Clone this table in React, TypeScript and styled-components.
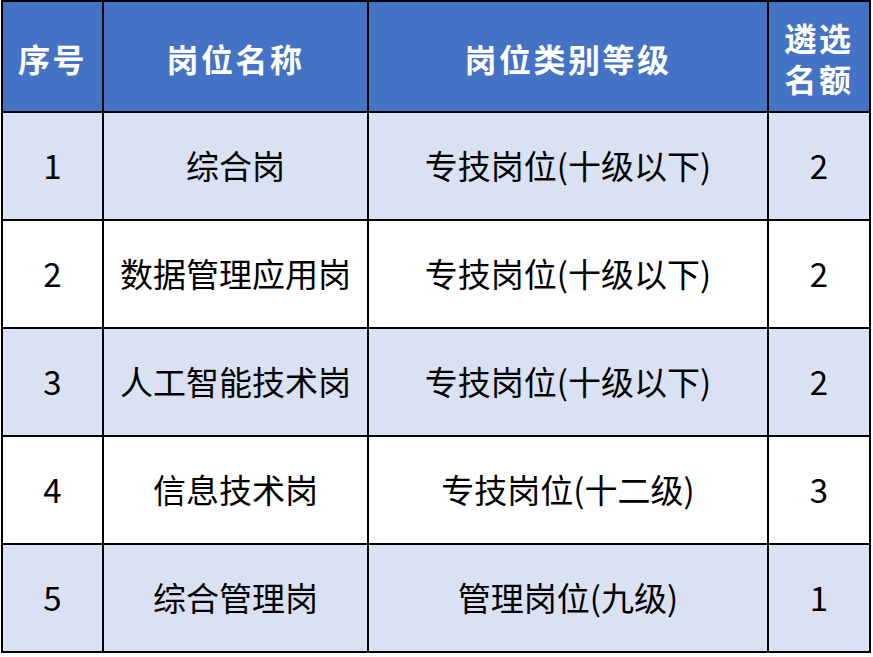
import styled, { createGlobalStyle } from 'styled-components';

const GlobalStyle = createGlobalStyle`
  html, body {
    margin: 0;
    padding: 0;
    background: #ffffff;
  }
  body {
    font-family: "Noto Sans CJK SC", "Noto Sans", sans-serif;
  }
`;

const Table = styled.div`
  display: grid;
  grid-template-columns: 99px 263px 398px 100px;
  grid-template-rows: 109px repeat(5, 106px);
  gap: 2px;
  padding: 2px;
  margin-left: 1px;
  width: max-content;
  background: #000000;
`;

const HeadCell = styled.div`
  display: flex;
  flex-direction: column;
  align-items: center;
  justify-content: center;
  text-align: center;
  background: #4472c4;
  color: #ffffff;
  font-size: 32px;
  font-weight: 700;
  letter-spacing: 2.5px;
  line-height: 41px;
  padding-top: 3px;
`;

const HeadLine = styled.span`
  display: block;
  height: 41px;
`;

const Cell = styled.div<{ $shaded: boolean }>`
  display: flex;
  align-items: center;
  justify-content: center;
  background: ${(p) => (p.$shaded ? '#d9e1f2' : '#ffffff')};
  color: #000000;
  font-size: 33px;
  font-weight: 400;
  padding-bottom: 2px;
`;

const rows = [
  ['1', '综合岗', '专技岗位(十级以下)', '2'],
  ['2', '数据管理应用岗', '专技岗位(十级以下)', '2'],
  ['3', '人工智能技术岗', '专技岗位(十级以下)', '2'],
  ['4', '信息技术岗', '专技岗位(十二级)', '3'],
  ['5', '综合管理岗', '管理岗位(九级)', '1'],
];

export default function App() {
  return (
    <>
      <GlobalStyle />
      <Table>
        <HeadCell>序号</HeadCell>
        <HeadCell>岗位名称</HeadCell>
        <HeadCell>岗位类别等级</HeadCell>
        <HeadCell>
          <HeadLine>遴选</HeadLine>
          <HeadLine>名额</HeadLine>
        </HeadCell>
        {rows.map((row, i) =>
          row.map((text, j) => (
            <Cell key={`${i}-${j}`} $shaded={i % 2 === 0}>
              {text}
            </Cell>
          ))
        )}
      </Table>
    </>
  );
}
